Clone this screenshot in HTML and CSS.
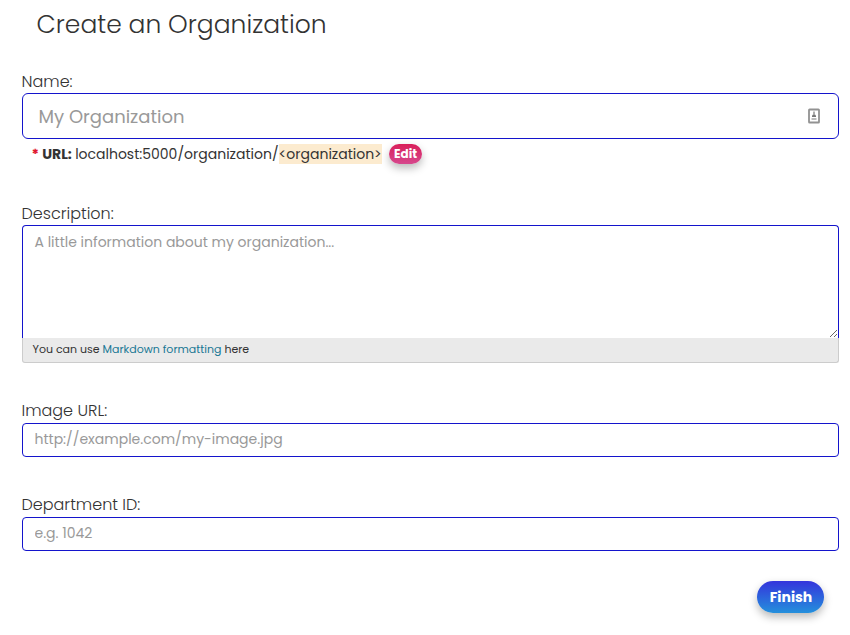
FILE: index.html
```
<!DOCTYPE html>
<html lang="en">
<head>
<meta charset="utf-8">
<title>Create an Organization</title>
<link rel="stylesheet" href="styles.css">
</head>
<body>
<form class="organization-form">
  <h1>Create an Organization</h1>
  <div class="field field-name">
    <label for="name">Name:</label>
    <div class="input-wrap">
      <input id="name" class="large" type="text" placeholder="My Organization">
      <svg class="contact-icon" width="12" height="16" viewBox="0 0 12 16" aria-hidden="true">
        <rect x="1" y="1.5" width="10" height="13" rx=".6" fill="#fff" stroke="#929292" stroke-width="1.8"/>
        <path d="M6 3.5v3" stroke="#999" stroke-width="1.6"/>
        <path d="M4 9V7.4L5 6.5h2l1 .9V9z" fill="#777"/>
        <path d="M3.5 11h5" stroke="#bbb" stroke-width="2"/>
      </svg>
    </div>
    <div class="slug"><span class="required">*</span><strong>URL:</strong><span>localhost:5000/organization/</span><span class="slug-value">&lt;organization&gt;</span><button type="button" class="edit">Edit</button></div>
  </div>
  <div class="field field-description">
    <label for="description">Description:</label>
    <textarea id="description" placeholder="A little information about my organization..."></textarea>
    <div class="editor-info">You can use <a href="#">Markdown formatting</a> here</div>
  </div>
  <div class="field field-image">
    <label for="image">Image URL:</label>
    <input id="image" type="text" placeholder="http://example.com/my-image.jpg">
  </div>
  <div class="field field-department">
    <label for="department">Department ID:</label>
    <input id="department" type="text" placeholder="e.g. 1042">
  </div>
  <div class="actions"><button type="button" class="finish">Finish</button></div>
</form>
</body>
</html>
```
FILE: styles.css
```
* { box-sizing: border-box; }
body {
  margin: 0;
  background: #fff;
  color: #333;
  font: 14px/20px Poppins, Inter, "Open Sans", sans-serif;
}
.organization-form {
  display: flex;
  flex-direction: column;
  min-height: 635px;
  padding: 5px 11px 0 22px;
}
h1 {
  margin: 0 0 27px 14.5px;
  font-size: 25px;
  line-height: 40px;
  font-weight: 300;
}
.field { display: flex; flex-direction: column; }
.field-name { height: 132px; }
.field-description { height: 197px; }
.field-image { height: 94px; }
label {
  height: 21px;
  margin-left: -.5px;
  line-height: 20px;
  font-size: 16px;
  font-weight: 300;
}
.field-image label, .field-department label { height: 22px; }
input, textarea {
  display: block;
  width: 100%;
  margin: 0;
  border: 1px solid #1414cc;
  border-radius: 4px;
  outline: 0;
  background: #fff;
  color: #333;
  font: inherit;
}
input { height: 34px; padding: 0 11.5px 2px; }
.large {
  height: 46px;
  padding: 0 15.5px;
  border-radius: 6px;
  font-size: 18px;
}
textarea {
  height: 113px;
  padding: 6px 11.5px;
  border-bottom: 0;
  border-radius: 4px 4px 0 0;
  resize: vertical;
}
::placeholder { color: #999; opacity: 1; }
.input-wrap { position: relative; }
.contact-icon { position: absolute; top: 15px; right: 19px; }
.slug {
  display: flex;
  align-items: center;
  height: 30px;
  padding-left: 9.5px;
}
.slug strong { margin: 0 3.3px 0 3.2px; }
.required { color: #e0142e; font-weight: 700; }
.slug-value { background: #fcebcf; }
button {
  border: 0;
  color: #fff;
  font: inherit;
  font-weight: 700;
  box-shadow: 0 4px 8px rgba(0, 0, 0, .28);
}
.edit {
  width: 33px;
  height: 20px;
  margin-left: 7.4px;
  padding: 0;
  border-radius: 10px;
  background: linear-gradient(#d91f5a, #d6488d);
  font-size: 12px;
}
.editor-info {
  height: 25px;
  padding: 0 9.5px;
  border: 1px solid #ccc;
  border-top: 0;
  border-radius: 0 0 3px 3px;
  background: #eaeaea;
  font-size: 11px;
  line-height: 23px;
}
a { color: #187794; text-decoration: none; }
.actions { display: flex; justify-content: flex-end; padding: 30px 15px 0 0; }
.finish {
  width: 67px;
  height: 32px;
  padding: 0 0 0 1px;
  border-radius: 16px;
  background: linear-gradient(#3434dc, #2490dc);
}
```
